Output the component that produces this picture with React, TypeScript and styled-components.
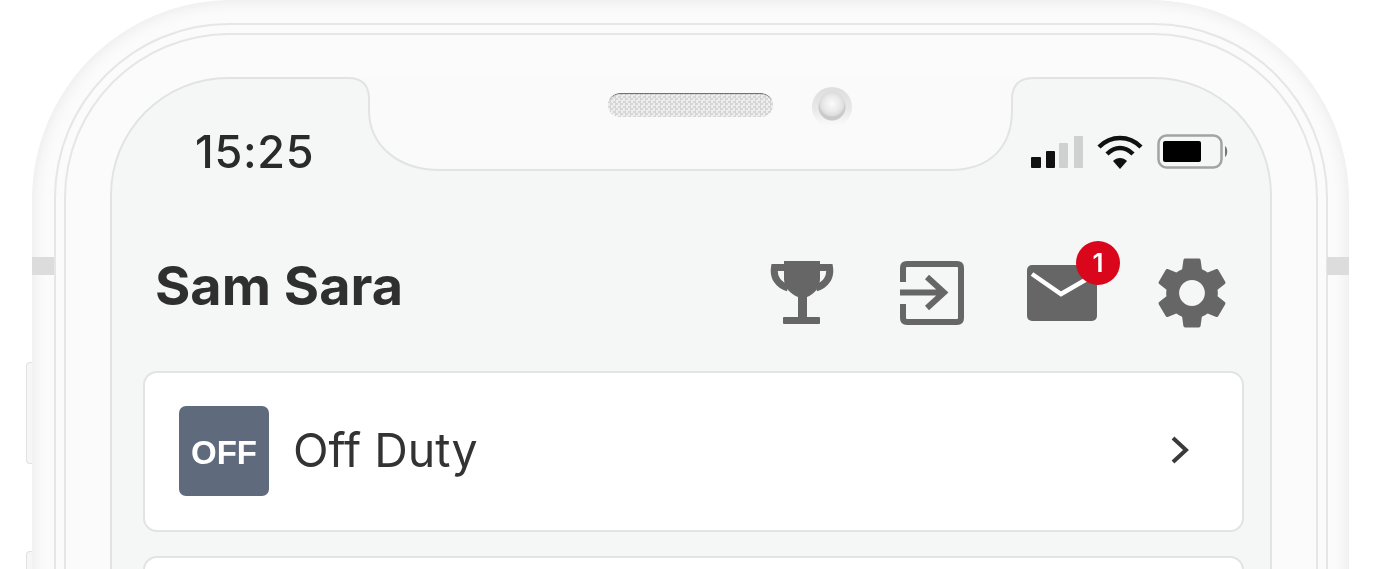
import React from 'react';
import styled, { createGlobalStyle } from 'styled-components';
import { MdSettings } from 'react-icons/md';

const GlobalStyle = createGlobalStyle`
  html, body {
    margin: 0;
    padding: 0;
    background: #fff;
    overflow: hidden;
  }
  body {
    font-family: Inter, "Liberation Sans", Arial, sans-serif;
  }
`;

const App = () => (
  <Page>
    <GlobalStyle />
    <Phone>
      <SideButton $top={362} $height={102} />
      <SideButton $top={551} $height={102} />
      <Shell>
        <Band $side="left" />
        <Band $side="right" />
        <OuterLine>
          <InnerLine>
            <Screen>
              <Notch>
                <NotchShape width="702" height="96" viewBox="0 0 702 96">
                  <path d="M8 0 H694 V1 C680 1 672 8 672 22 V33 C672 70 650 93 610 93 H100 C60 93 29 70 29 33 V22 C29 8 22 1 8 1 Z" fill="#fafafa" />
                  <path d="M8 1 C22 1 29 8 29 22 V33 C29 70 60 93 100 93 H610 C650 93 672 70 672 33 V22 C672 8 680 1 694 1" fill="none" stroke="#e2e3e3" strokeWidth="2" />
                </NotchShape>
                <Speaker />
                <Camera />
              </Notch>

              <StatusBar>
                <Time>15:25</Time>
                <StatusIcons>
                  <svg width="52" height="32" viewBox="0 0 52 32">
                    <rect x="0" y="21" width="10" height="11" rx="1" fill="#111" />
                    <rect x="15" y="15" width="9" height="17" rx="1" fill="#111" />
                    <rect x="28" y="7" width="9" height="25" rx="1" fill="#cfd0d0" />
                    <rect x="43" y="0" width="9" height="32" rx="1" fill="#cfd0d0" />
                  </svg>
                  <svg width="46" height="34" viewBox="0 0 46 34">
                    <path d="M2 12 C14 0 32 0 44 12" fill="none" stroke="#111" strokeWidth="4.5" />
                    <path d="M10 19 C18 11 28 11 36 19" fill="none" stroke="#111" strokeWidth="4.5" />
                    <path d="M16 26 L23 34 L30 26 C26 22 20 22 16 26 Z" fill="#111" />
                  </svg>
                  <svg width="71" height="36" viewBox="0 0 71 36">
                    <rect x="1.5" y="1.5" width="63" height="32" rx="8" fill="none" stroke="#a2a3a3" strokeWidth="2.5" />
                    <rect x="6" y="7" width="38" height="21" rx="2" fill="#000" />
                    <path d="M68 12 C71 14 71 21 68 23 Z" fill="#777" />
                  </svg>
                </StatusIcons>
              </StatusBar>

              <Header>
                <Name>Sam Sara</Name>
                <Actions>
                  <ActionIcon $width={64} $after={66}>
                    <svg width="64" height="64" viewBox="0 0 64 64">
                      <path d="M14 0 H50 V18 C50 27 43 34 37 36 V56 H28 V36 C22 34 14 27 14 18 Z" fill="#666" />
                      <path d="M15 6.5 H4.5 C3 16 8 24 18 27 M49 6.5 H59.5 C61 16 56 24 46 27" fill="none" stroke="#666" strokeWidth="7" />
                      <rect x="13" y="56" width="37" height="7" rx="1" fill="#666" />
                    </svg>
                  </ActionIcon>
                  <ActionIcon $width={64} $after={63}>
                    <svg width="64" height="64" viewBox="0 0 64 64">
                      <path d="M3 21 V7 Q3 3 7 3 H57 Q61 3 61 7 V57 Q61 61 57 61 H7 Q3 61 3 57 V43" fill="none" stroke="#666" strokeWidth="6" />
                      <path d="M0 31.5 H44 M27 16 L44 31.5 L27 47" fill="none" stroke="#666" strokeWidth="6" />
                    </svg>
                  </ActionIcon>
                  <ActionIcon $width={70} $after={60}>
                    <svg width="70" height="56" viewBox="0 0 70 56">
                      <rect width="70" height="56" rx="5" fill="#666" />
                      <path d="M5 9 L34 29 L60 14" fill="none" stroke="#fff" strokeWidth="4.5" />
                    </svg>
                    <Badge>1</Badge>
                  </ActionIcon>
                  <ActionIcon $width={70}>
                    <GearIcon size={86} color="#666" />
                  </ActionIcon>
                </Actions>
              </Header>

              <List>
                <Row>
                  <StatusTile>OFF</StatusTile>
                  <RowLabel>Off Duty</RowLabel>
                  <Chevron width="18" height="28" viewBox="0 0 18 28">
                    <path d="M2 2 L15 14 L2 26" fill="none" stroke="#3a3a3a" strokeWidth="4" />
                  </Chevron>
                </Row>
                <Row />
              </List>
            </Screen>
          </InnerLine>
        </OuterLine>
      </Shell>
    </Phone>
  </Page>
);

export default App;

const Page = styled.div`
  height: 569px;
  overflow: hidden;
  padding-left: 32px;
  box-sizing: border-box;
`;

const Phone = styled.div`
  position: relative;
  width: 1317px;
  filter: blur(0.6px);
`;

const SideButton = styled.div<{ $top: number; $height: number }>`
  position: absolute;
  left: -6px;
  top: ${(p) => p.$top}px;
  width: 8px;
  height: ${(p) => p.$height}px;
  box-sizing: border-box;
  background: #f6f6f6;
  border: 1px solid #e2e2e2;
  border-right: none;
  border-radius: 4px 0 0 4px;
`;

const Shell = styled.div`
  position: relative;
  box-sizing: border-box;
  height: 1100px;
  padding: 23px 21px 0 22px;
  background: #fbfbfb;
  border-radius: 200px 200px 0 0;
  box-shadow: inset 0 0 16px #e6e6e6;
`;

const Band = styled.div<{ $side: 'left' | 'right' }>`
  position: absolute;
  top: 257px;
  ${(p) => p.$side}: 0;
  width: 22px;
  height: 18px;
  background: #dcdcdc;
`;

const OuterLine = styled.div`
  box-sizing: border-box;
  height: 100%;
  padding: 8px 8px 0;
  border: 2px solid #e6e6e6;
  border-bottom: none;
  border-radius: 175px 175px 0 0;
`;

const InnerLine = styled.div`
  box-sizing: border-box;
  height: 100%;
  padding: 42px 44px 0;
  border: 2px solid #e6e6e6;
  border-bottom: none;
  border-radius: 165px 165px 0 0;
`;

const Screen = styled.div`
  position: relative;
  box-sizing: border-box;
  height: 100%;
  background: #f5f6f6;
  border: 2px solid #e2e3e3;
  border-bottom: none;
  border-radius: 118px 118px 0 0;
`;

const Notch = styled.div`
  position: absolute;
  top: -2px;
  left: 228px;
  width: 702px;
  height: 96px;
  display: flex;
  align-items: flex-start;
`;

const NotchShape = styled.svg`
  position: absolute;
  inset: 0;
`;

const Speaker = styled.div`
  position: relative;
  box-sizing: border-box;
  width: 165px;
  height: 24px;
  margin: 16px 0 0 268px;
  border-radius: 12px;
  background-color: #e4e4e4;
  background-image: repeating-conic-gradient(#d6d6d6 0 25%, #eeeeee 0 50%);
  background-size: 5px 5px;
  box-shadow: inset 0 2px 1px -1px #666;
`;

const Camera = styled.div`
  position: relative;
  width: 40px;
  height: 40px;
  margin: 10px 0 0 39px;
  border-radius: 50%;
  background:
    radial-gradient(circle at 50% 42%, #fbfbfb 0, #eaeaea 8px, #dcdcdc 12px, transparent 13px),
    radial-gradient(circle at 50% 50%, #cacaca 0, #cacaca 13px, transparent 14px),
    linear-gradient(#dedede, #e8e8e8 55%, #fbfbfb);
`;

const StatusBar = styled.div`
  height: 144px;
  padding: 0 42px 0 83px;
  display: flex;
  align-items: center;
  justify-content: space-between;
`;

const Time = styled.div`
  position: relative;
  font-size: 45px;
  font-weight: 500;
  letter-spacing: 0.7px;
  color: #2a2a2a;
  margin-top: 1px;
`;

const StatusIcons = styled.div`
  position: relative;
  display: flex;
  align-items: center;
  gap: 14px;
  margin-top: 2px;
`;

const Header = styled.div`
  height: 140px;
  padding: 0 43px;
  display: flex;
  align-items: center;
  justify-content: space-between;
`;

const Name = styled.div`
  font-size: 54px;
  font-weight: 700;
  color: #2f2f2f;
  margin-bottom: 16px;
`;

const Actions = styled.div`
  display: flex;
  align-items: center;
`;

const ActionIcon = styled.div<{ $width: number; $after?: number }>`
  position: relative;
  display: flex;
  align-items: center;
  justify-content: center;
  width: ${(p) => p.$width}px;
  margin-right: ${(p) => p.$after ?? 0}px;
`;

const GearIcon = styled(MdSettings)`
  flex-shrink: 0;
  margin: -8px;
`;

const Badge = styled.div`
  position: absolute;
  top: -24px;
  right: -23px;
  width: 44px;
  height: 44px;
  border-radius: 50%;
  background: #d9061c;
  color: #fff;
  font-size: 26px;
  font-weight: 600;
  line-height: 44px;
  text-align: center;
`;

const List = styled.div`
  margin-top: 8px;
  padding: 0 26px 0 31px;
  display: flex;
  flex-direction: column;
  gap: 24px;
`;

const Row = styled.div`
  box-sizing: border-box;
  height: 161px;
  padding: 0 53px 0 34px;
  display: flex;
  align-items: center;
  background: #fff;
  border: 2px solid #e2e3e3;
  border-radius: 14px;
`;

const StatusTile = styled.div`
  width: 90px;
  height: 90px;
  margin-bottom: 2px;
  flex-shrink: 0;
  display: flex;
  align-items: center;
  justify-content: center;
  padding-top: 4px;
  box-sizing: border-box;
  background: #5f6a7d;
  border-radius: 7px;
  color: #fff;
  font-family: "Liberation Sans", Arial, sans-serif;
  font-size: 33px;
  font-weight: 700;
`;

const RowLabel = styled.div`
  flex: 1;
  margin: 0 0 3px 24px;
  font-size: 46.5px;
  color: #333;
`;

const Chevron = styled.svg`
  margin-bottom: 4px;
`;
